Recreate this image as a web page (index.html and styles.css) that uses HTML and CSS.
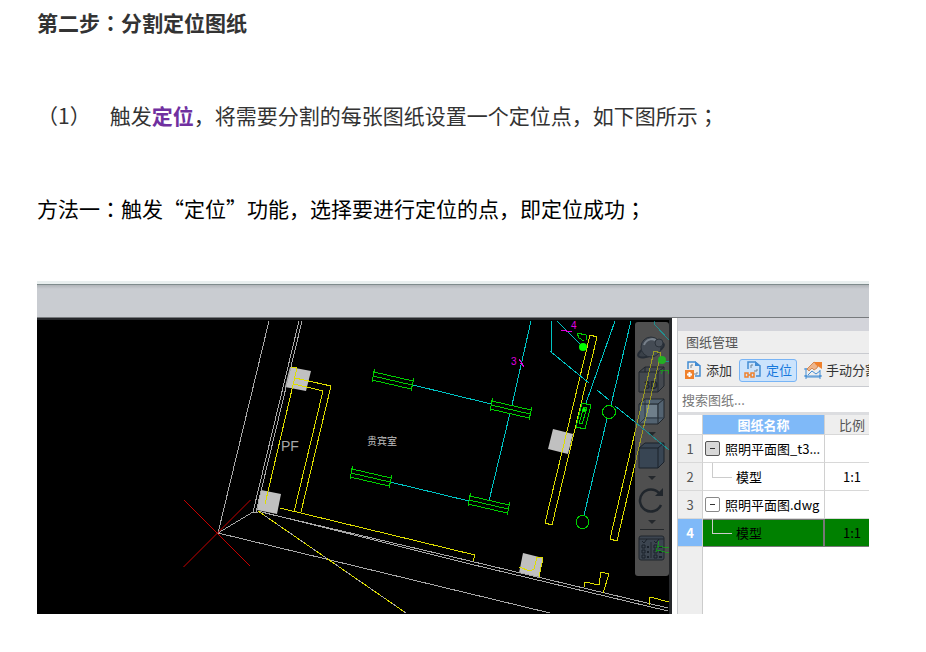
FILE: index.html
```html
<!DOCTYPE html>
<html lang="zh-CN">
<head>
<meta charset="utf-8">
<title>分割定位图纸</title>
<link rel="stylesheet" href="styles.css">
</head>
<body>
<main class="article">
  <h2 class="heading">第二步<span class="mid" lang="zh-TW">：</span>分割定位图纸</h2>
  <p class="step"><span class="mid" lang="zh-TW">（</span>1<span class="mid" lang="zh-TW">）</span><span class="step-text">触发<strong>定位</strong>，将需要分割的每张图纸设置一个定位点，如下图所示<span class="mid" lang="zh-TW">；</span></span></p>
  <p class="method">方法一<span class="mid" lang="zh-TW">：</span>触发“定位”功能，选择要进行定位的点，即定位成功<span class="mid" lang="zh-TW">；</span></p>

  <section class="app">
    <div class="ribbon"></div>
    <div class="workspace">
      <div class="canvas">
        <nav class="navbar" aria-label="视图工具">
          <button class="tool" aria-label="动态观察"><svg viewBox="0 0 30 32">
            <ellipse cx="14" cy="18" rx="14" ry="5" transform="rotate(-25 14 18)" fill="#3a4149" stroke="#262d36" stroke-width="2"/>
            <circle cx="14" cy="15" r="10" fill="#444b54" stroke="#2a3139"/>
            <path d="M7 13C9 7 17 5 20 10" fill="none" stroke="#78818b" stroke-width="2"/>
            <circle cx="22" cy="11" r="4" fill="#4b525b" stroke="#2a3139"/></svg></button>
          <button class="tool" aria-label="三维视图"><svg viewBox="0 0 30 32">
            <path d="M2 8L8 3H27V22L21 28H2ZM2 8H21V28M21 8L27 3M8 3V8" fill="#44494f" stroke="#20262c"/>
            <text x="7" y="25" class="cube-text">3D</text></svg></button>
          <button class="tool" aria-label="线框视图"><svg viewBox="0 0 30 32">
            <path d="M2 8L8 3H27V22L21 28H2Z" fill="#536371" stroke="#20262c"/>
            <path d="M8 3V22H27M8 22L2 28" fill="none" stroke="#2d3944"/>
            <path d="M9 9H20V21H9Z" fill="#6f7f8b"/>
            <path d="M2 8H21V28M21 8L27 3" fill="none" stroke="#20262c"/></svg></button>
          <span class="caret"></span>
          <button class="tool" aria-label="着色视图"><svg viewBox="0 0 30 32">
            <path d="M2 8L8 3H27V22L21 28H2Z" fill="#384553" stroke="#1b222b"/>
            <path d="M2 8H21V28M21 8L27 3" fill="none" stroke="#1b222b"/></svg></button>
          <span class="caret"></span>
          <button class="tool" aria-label="旋转"><svg viewBox="0 0 30 32">
            <path d="M22 9A11 11 0 1 0 24 21" fill="none" stroke="#20262c" stroke-width="2.500"/>
            <path d="M26 4V12H18Z" fill="#20262c"/></svg></button>
          <span class="caret"></span>
          <hr class="rule">
          <button class="tool" aria-label="显示设置"><svg viewBox="0 0 30 32">
            <rect x="2" y="4" width="25" height="24" rx="2" fill="#3c4550" stroke="#20262c"/>
            <path d="M2 7H27M14 10V26" stroke="#20262c"/>
            <path d="M5 9L7 11L10 7M17 9L19 11L22 7" fill="none" stroke="#1b222b"/>
            <path d="M5 13H8V16H5ZM5 18H8V21H5ZM5 23H8V26H5ZM17 13H20V16H17ZM17 18H20V21H17ZM17 23H20V26H17Z" fill="none" stroke="#1b222b"/>
            <path d="M10 15H12M10 20H12M10 25H12M22 15H25M22 20H25M22 25H25" stroke="#1b222b" stroke-width="2"/></svg></button>
        </nav>
        <svg class="drawing" viewBox="37 320 632 294" preserveAspectRatio="xMinYMin slice" role="img" aria-label="照明平面图">
          <defs>
            <path id="lamp" d="M2.500 0L0 13M42 9L39 22M2 3L41 12M1 7L40 16M0 11L39 20"/>
          </defs>
          <g class="column">
            <path d="M290 367L311 371L306 391L285 387Z"/>
            <path d="M261 490L281 494L277 514L257 510Z"/>
            <path d="M553 429L573 434L568 454L548 449Z"/>
            <path d="M523 553L543 558L539 577L519 573Z"/>
          </g>
          <g class="line wall">
            <path d="M269 321L218 533L253 512H258M299 321L253 512M302 321L256 512"/>
            <path d="M218 533L550 613M265 513L470 561L668 608M258 511L470 564L668 611"/>
            <path d="M258 511L406 613"/>
          </g>
          <g class="line yellow">
            <path d="M291 367L297 368L293 385L265 504M295 378L331 386L301 512M294 384L323 391L294 512"/>
            <path d="M280 508L475 555L473 561"/>
            <path d="M258 511L406 613" stroke-dasharray="9 5"/>
            <path d="M590 335L597 337L552 525L545 523ZM635 432L610 539L617 541L635 464"/>
            <path d="M519 567L530 571L534 569L537 557L543 558L539 577"/>
            <path d="M584 587L585 582L599 585L601 572L609 574L603 593M649 605L650 597L669 602"/>
          </g>
          <g class="line cyan">
            <path d="M413 385L491 404M531 321L512 405M510 413L489 501M390 482L469 501"/>
            <path d="M552 321L551 352L589 383M597 390L609 400M615 406L635 422M557 321L582 346"/>
            <path d="M615 321L586 403M631 321L611 405M607 419L584 515"/>
          </g>
          <g class="line green">
            <use href="#lamp" x="372" y="369"/>
            <use href="#lamp" x="490" y="398"/>
            <use href="#lamp" x="350" y="466"/>
            <use href="#lamp" x="468" y="493"/>
            <path d="M582 403L591 405L585 429L576 427ZM584 407L587 408L582 424L579 423Z"/>
            <path d="M577 333L579 338L584 341M577 333L586 335L587 340"/>
            <circle cx="609" cy="412" r="6.500"/>
            <circle cx="582.500" cy="522" r="6.500"/>
          </g>
          <g class="dot">
            <circle cx="583" cy="347" r="4"/>
            <circle cx="584" cy="410" r="2"/>
          </g>
          <g class="veiled">
            <path class="line yellow" d="M635 432L654 351L661 353L635 464"/>
            <path class="line cyan" d="M635 422L669 450M654 321L655 325L669 340M662 361H669"/>
            <path class="line green" d="M660 371L668 370L669 374M663 370L661 374M659 541L656 552M657 546L669 548M657 550L669 553"/>
            <circle class="dot" cx="662" cy="360" r="4"/>
          </g>
          <g class="red">
            <path d="M184 500L250 566"/>
            <path d="M250.500 500L183.500 567"/>
          </g>
          <g class="line magenta"><path d="M519 359L524 367M520 363H523M561 330L572 332"/></g>
          <text class="cad-room" x="367" y="445">贵宾室</text>
          <text class="cad-label" x="281" y="451">PF</text>
          <text class="cad-mark" x="511" y="365">3</text>
          <text class="cad-mark" x="571" y="329">4</text>
        </svg>
      </div>

      <aside class="panel">
        <h3 class="panel-title">图纸管理</h3>
        <div class="toolbar">
          <button class="action"><svg width="17" height="18" viewBox="0 0 17 18">
            <path d="M3 8V1H10L15 5V15H10" fill="none" stroke="#438dd4" stroke-width="1.500"/>
            <path d="M10 0L16 5H10Z" fill="#438dd4"/><path d="M6 7V4H8M9 13H12V11" fill="none" stroke="#738493"/>
            <rect x="0" y="9" width="9" height="9" fill="#f0812c"/><path d="M2 13.500H7M4.500 11V16" stroke="#fff" stroke-width="2"/></svg>添加</button>
          <button class="action active"><svg width="18" height="18" viewBox="0 0 18 18">
            <path d="M4 8V1H11L16 5V15H12" fill="none" stroke="#438dd4" stroke-width="1.500"/>
            <path d="M11 0L17 5H11Z" fill="#438dd4"/><path d="M7 7V4H9M10 10H13V8" fill="none" stroke="#738493"/>
            <path d="M1 12H4V16H1ZM7 12H10V16H7ZM4 14H7" fill="none" stroke="#f0812c" stroke-width="1.500"/></svg>定位</button>
          <button class="action"><svg width="18" height="18" viewBox="0 0 18 18">
            <path d="M2 7V16H16V9M0 8H4M0 15H18M2 14V18M16 14V18M4 14L8 10L12 13L16 10" fill="none" stroke="#438dd4"/>
            <path d="M3 8L10 1L14 4L13 7L10 9L8 7L5 10Z" fill="#edb58c" stroke="#d28a56"/>
            <path d="M10 1H18V8L15 6L12 4Z" fill="#f0812c"/></svg>手动分割</button>
        </div>
        <input class="search" type="text" placeholder="搜索图纸..." aria-label="搜索图纸">
        <table class="sheets">
          <colgroup><col class="c-num"><col class="c-name"><col class="c-ratio"></colgroup>
          <thead><tr><td class="corner"></td><th class="picked">图纸名称</th><th>比例</th></tr></thead>
          <tbody>
            <tr><th>1</th><td><div class="node"><button class="toggle shaded" aria-label="折叠"></button>照明平面图_t3...</div></td><td class="ratio"></td></tr>
            <tr><th>2</th><td><div class="leaf"><i class="branch"></i>模型</div></td><td class="ratio">1:1</td></tr>
            <tr><th>3</th><td><div class="node"><button class="toggle" aria-label="折叠"></button>照明平面图.dwg</div></td><td class="ratio"></td></tr>
            <tr class="selected"><th>4</th><td><div class="leaf"><i class="branch"></i>模型</div></td><td class="ratio">1:1</td></tr>
          </tbody>
        </table>
        <div class="filler"></div>
      </aside>
    </div>
  </section>
</main>
</body>
</html>
```

FILE: styles.css
```css
* { box-sizing: border-box; }

body {
  margin: 0;
  background: #fff;
  color: #333;
  font-family: "Noto Sans CJK SC", sans-serif;
}

.article { padding: 6px 57px 38px 37px; }

.heading, .step, .method {
  margin: 0 0 61px;
  font-size: 21px;
  line-height: 32px;
}
.heading { font-weight: 700; }
.step strong { color: #7030a0; }
.step-text { margin-left: 19px; }
.method { margin-bottom: 57px; color: #000; }
.mid { font-family: "Noto Sans CJK TC", sans-serif; }

/* Application window */
.app { overflow: hidden; font-size: 13px; }
.ribbon {
  height: 37px;
  border-top: 3px solid #e8eeee;
  border-bottom: 1px solid #777a7d;
  background: linear-gradient(#7f8b8c 0 1px, #b0b4b8 1px, #c9ccd1 5px);
}
.workspace { display: flex; height: 296px; }

.canvas {
  position: relative;
  flex: 1;
  min-width: 0;
  overflow: hidden;
  border-top: 2px solid #25272a;
  border-right: 3px solid #25272a;
  background: #000;
}
.drawing {
  position: relative;
  display: block;
  width: 100%;
  height: 294px;
  pointer-events: none;
}
.line { fill: none; stroke-width: 1; shape-rendering: crispEdges; }
.wall { stroke: #a8a8a8; }
.yellow { stroke: #dede00; }
.cyan { stroke: #00c4c4; }
.green { stroke: #00d000; }
.red { fill: none; stroke: #c80000; }
.magenta { stroke: #e000e0; }
.column { fill: #c0c0c0; }
.dot { fill: #00ff00; }
.veiled { opacity: .55; }
.cad-room { fill: #c0c0c0; font-size: 10px; }
.cad-label { fill: #a8a8a8; font: 14px "Liberation Sans Narrow", "Liberation Sans", sans-serif; }
.cad-mark { fill: #e000e0; font: 10px "Liberation Sans", sans-serif; }

.navbar {
  position: absolute;
  top: 2px;
  right: 0;
  display: flex;
  flex-direction: column;
  align-items: center;
  width: 34px;
  height: 254px;
  padding-top: 10px;
  border-radius: 3px;
  background: #4f4f4f;
}
.tool {
  flex: none;
  width: 30px;
  height: 32px;
  padding: 0;
  border: 0;
  background: none;
}
.tool svg { display: block; width: 30px; height: 32px; }
.cube-text { fill: #20262c; font: bold 11px "Liberation Sans", sans-serif; }
.caret {
  flex: none;
  margin: 4px 0;
  border: 4px solid transparent;
  border-top-color: #24282c;
  border-bottom: 0;
}
.rule { width: 24px; margin: 1px 0 2px; border: 0; border-top: 1px solid #25282b; }

/* Sheet manager */
.panel {
  display: flex;
  flex-direction: column;
  width: 197px;
  overflow: hidden;
  border-left: 5px solid #fff;
  background: #eee;
  box-shadow: inset 1px 0 #c6c8cb;
}
.panel-title {
  margin: 0 0 0 1px;
  padding: 0 0 0 8px;
  border-top: 13px solid #d3d4da;
  border-bottom: 1px solid #c9cbd0;
  color: #555;
  font-size: 13px;
  font-weight: 400;
  line-height: 22px;
}
.toolbar {
  display: flex;
  align-items: center;
  gap: 3px;
  height: 32px;
  padding-left: 4px;
}
.action {
  display: flex;
  flex: none;
  align-items: center;
  gap: 4px;
  height: 23px;
  padding: 0 3px;
  border: 1px solid transparent;
  border-radius: 3px;
  background: none;
  color: #333;
  font: 13px "Noto Sans CJK SC", sans-serif;
  line-height: 20px;
}
.action.active { padding: 0 4px; border-color: #78b4f5; background: #cbe3fc; color: #1678dc; }
.search {
  width: 100%;
  height: 26px;
  margin-left: 1px;
  padding: 0 4px;
  border: 0;
  border-top: 1px solid #c9cbd0;
  background: #fff;
  font: 13px "Noto Sans CJK SC", sans-serif;
}
.search::placeholder { color: #777; }

.sheets {
  flex: none;
  width: 202px;
  margin-left: 1px;
  border-top: 3px solid #dcdde0;
  border-collapse: separate;
  border-spacing: 0;
  table-layout: fixed;
  background: #fff;
  color: #000;
  line-height: 18px;
}
.c-num { width: 25px; }
.c-name { width: 122px; }
.sheets th, .sheets td {
  padding: 0;
  border-right: 1px solid #d0d0d0;
  border-bottom: 1px solid #d8d8d8;
  font-weight: 400;
}
.sheets th { background: #eee; color: #555; text-align: center; }
.sheets thead th { height: 20px; }
.sheets th.picked { background: #7fb9f8; color: #fff; font-weight: 700; }
.sheets tbody th { height: 28px; }
.sheets .ratio { text-align: center; }
.node, .leaf { display: flex; align-items: center; height: 27px; white-space: nowrap; }
.node { gap: 5px; padding-left: 2px; }
.toggle {
  display: flex;
  flex: none;
  align-items: center;
  justify-content: center;
  width: 15px;
  height: 15px;
  padding: 0;
  border: 1px solid #888;
  border-radius: 2px;
  background: #fff;
}
.toggle::before { content: ""; width: 5px; height: 1px; background: #333; }
.toggle.shaded { border-color: #555; background: #d8d8d8; }
.leaf { gap: 4px; padding-left: 9px; }
.branch {
  align-self: flex-start;
  width: 20px;
  height: 15px;
  border-left: 1px solid #ccc;
  border-bottom: 1px solid #ccc;
}
.sheets .selected th { background: #7fb9f8; color: #fff; font-weight: 700; }
.sheets .selected td { border-bottom-color: #777; background: #008000; }
.sheets .selected td:nth-child(2) { border-right-color: #777; box-shadow: inset 0 1px #777, inset -1px 0 #777; }
.filler { flex: 1; margin-left: 1px; background: linear-gradient(90deg, #eee 24px, #ccc 24px 25px, #fff 25px); }
```
